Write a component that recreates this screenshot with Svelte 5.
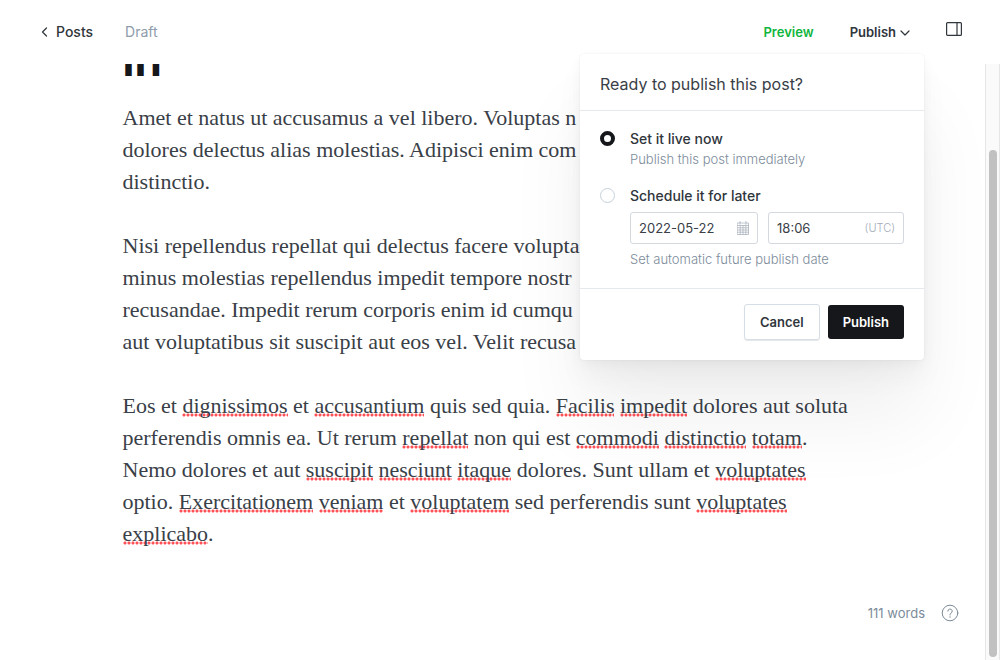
<script>
  let choice = $state('now');
  let date = $state('2022-05-22');
  let time = $state('18:06');

  // Each line is a list of runs; words flagged by the spell checker are wrapped in underscores.
  const paragraphs = [
    [
      'Amet et natus ut accusamus a vel libero. Voluptas n',
      'dolores delectus alias molestias. Adipisci enim com',
      'distinctio.'
    ],
    [
      'Nisi repellendus repellat qui delectus facere volupta',
      'minus molestias repellendus impedit tempore nostr',
      'recusandae. Impedit rerum corporis enim id cumqu',
      'aut voluptatibus sit suscipit aut eos vel. Velit recusa'
    ],
    [
      'Eos et _dignissimos_ et _accusantium_ quis sed quia. _Facilis_ _impedit_ dolores aut soluta',
      'perferendis omnis ea. Ut rerum _repellat_ non qui est _commodi_ _distinctio_ _totam_.',
      'Nemo dolores et aut _suscipit_ _nesciunt_ _itaque_ dolores. Sunt ullam et _voluptates_',
      'optio. _Exercitationem_ _veniam_ et _voluptatem_ sed perferendis sunt _voluptates_',
      '_explicabo_.'
    ]
  ].map((lines) => lines.map((line) => line.split('_')));
</script>

<div class="app">
  <header>
    <a class="back" href="#posts">
      <svg width="7" height="10" viewBox="0 0 7 10"><path d="M5.5 1 1.5 5l4 4" /></svg>
      Posts
    </a>
    <span class="status">Draft</span>
    <nav>
      <button class="preview">Preview</button>
      <button class="menu">
        Publish
        <svg width="10" height="6" viewBox="0 0 10 6"><path d="m1 1 4 4 4-4" /></svg>
      </button>
      <button class="sidebar" aria-label="Settings">
        <svg width="16" height="14" viewBox="0 0 16 14"><rect x=".6" y=".6" width="14.8" height="12.8" rx="1" /><path d="M11 .6v12.8" /></svg>
      </button>
    </nav>

    <form class="dialog" onsubmit={(e) => e.preventDefault()}>
      <h2>Ready to publish this post?</h2>
      <div class="options">
        <div class="option">
          <input type="radio" id="now" value="now" bind:group={choice} />
          <div class="detail">
            <label for="now">Set it live now</label>
            <p>Publish this post immediately</p>
          </div>
        </div>
        <div class="option">
          <input type="radio" id="later" value="later" bind:group={choice} />
          <div class="detail">
            <label for="later">Schedule it for later</label>
            <div class="fields">
              <div class="field">
                <input type="text" aria-label="Date" bind:value={date} />
                <svg width="12" height="14" viewBox="0 0 12 14">
                  <path d="M.5 2h11v11.5H.5zM.5 4.5h11M.5 6.8h11M.5 9h11M.5 11.2h11M3.2 4.5v9M6 4.5v9M8.8 4.5v9M3 .3v3M9 .3v3" />
                </svg>
              </div>
              <div class="field time">
                <input type="text" aria-label="Time" bind:value={time} />
                <small>(UTC)</small>
              </div>
            </div>
            <p>Set automatic future publish date</p>
          </div>
        </div>
      </div>
      <div class="actions">
        <button type="button" class="cancel">Cancel</button>
        <button type="submit" class="publish">Publish</button>
      </div>
    </form>
  </header>

  <div class="body">
    <main>
      <article>
        <h1>in</h1>
        {#each paragraphs as lines}
          <p>
            {#each lines as runs}
              <span class="line">{#each runs as run, i}<span class:misspelt={i % 2 === 1}>{run}</span>{/each}</span>
            {/each}
          </p>
        {/each}
      </article>
      <footer>
        <span>111 words</span>
        <a href="#help" aria-label="Help">
          <svg width="18" height="18" viewBox="0 0 18 18">
            <circle cx="9" cy="9" r="7.8" />
            <path d="M6.8 7.2a2.2 2.2 0 1 1 3.2 2c-.7.4-1 .7-1 1.5v.3" />
            <circle class="dot" cx="9" cy="13" r=".7" />
          </svg>
        </a>
      </footer>
    </main>
    <div class="track"><div class="thumb"></div></div>
  </div>
</div>

<style>
  :global(body) {
    margin: 0;
    background: #fff;
  }
  .app {
    display: flex;
    flex-direction: column;
    height: 100vh;
    overflow: hidden;
    font: 14px/20px Inter, sans-serif;
    color: #394047;
  }
  .app * {
    box-sizing: border-box;
  }
  svg {
    display: block;
    fill: none;
    stroke: currentColor;
    stroke-width: 1.2;
    stroke-linecap: round;
    stroke-linejoin: round;
  }
  button {
    padding: 0;
    border: 0;
    background: none;
    color: #30363c;
    font: inherit;
    font-size: 13px;
    font-weight: 600;
  }
  a {
    color: inherit;
    text-decoration: none;
  }
  header {
    position: relative;
    z-index: 1;
    display: flex;
    align-items: center;
    gap: 32px;
    flex: none;
    height: 64px;
    padding: 0 38px 0 41px;
  }
  .back {
    display: flex;
    align-items: center;
    gap: 8px;
    font-weight: 500;
    color: #30363c;
  }
  .status {
    color: #8e9cac;
  }
  nav {
    display: flex;
    align-items: center;
    gap: 36px;
    margin-left: auto;
  }
  .preview {
    color: #0fb53c;
  }
  .menu {
    display: flex;
    align-items: center;
    gap: 4px;
  }
  .menu svg {
    margin-top: 2px;
  }
  .sidebar {
    padding-bottom: 6px;
  }
  .dialog {
    position: absolute;
    top: 54px;
    right: 76px;
    width: 344px;
    border-radius: 4px;
    background: #fff;
    box-shadow:
      0 0 2px rgba(0, 0, 0, 0.08),
      0 4px 12px rgba(0, 0, 0, 0.03),
      0 16px 28px rgba(0, 0, 0, 0.04),
      0 60px 80px rgba(0, 0, 0, 0.06);
  }
  h2 {
    margin: 0;
    padding: 20px 20px 16px;
    border-bottom: 1px solid #e5e9ed;
    font-size: 16px;
    font-weight: 400;
    line-height: 20px;
  }
  .options {
    display: flex;
    flex-direction: column;
    gap: 17px;
    padding: 18px 20px 19px;
  }
  .option {
    display: flex;
    gap: 15px;
  }
  input[type='radio'] {
    appearance: none;
    flex: none;
    width: 15px;
    height: 15px;
    margin: 2px 0;
    border: 1px solid #c5d0da;
    border-radius: 50%;
  }
  input[type='radio']:checked {
    border: 4px solid #15171a;
  }
  .detail {
    flex: 1;
  }
  label {
    display: block;
    font-weight: 500;
    color: #30363c;
  }
  .detail p {
    margin: 0;
    font-size: 13px;
    font-weight: 300;
    color: #7c8b9a;
  }
  .fields {
    display: flex;
    gap: 10px;
    margin: 6px 0 5px;
  }
  .field {
    display: flex;
    align-items: center;
    flex: 14;
    height: 32px;
    padding: 0 8px;
    border: 1px solid #d3d9de;
    border-radius: 3px;
    color: #a3acb8;
  }
  .field.time {
    flex: 15;
  }
  .field input {
    flex: 1;
    width: 0;
    padding: 0;
    border: 0;
    outline: 0;
    background: none;
    font: 13px/20px Inter, sans-serif;
    color: #394047;
  }
  .field svg {
    stroke-width: 0.7;
  }
  small {
    font-size: 11px;
    font-weight: 300;
  }
  .actions {
    display: flex;
    align-items: center;
    justify-content: flex-end;
    gap: 8px;
    padding: 15px 20px 20px;
    border-top: 1px solid #e5e9ed;
  }
  .cancel,
  .publish {
    height: 34px;
    padding: 0 15px;
    border-radius: 3px;
  }
  .cancel {
    height: 36px;
    border: 1px solid #d5dee6;
    box-shadow: 0 1px 1px rgba(0, 0, 0, 0.1);
  }
  .publish {
    background: #15171a;
    color: #fff;
  }
  .body {
    display: flex;
    flex: 1;
    min-height: 0;
  }
  main {
    display: flex;
    flex-direction: column;
    flex: 1;
    min-width: 0;
    overflow: hidden;
  }
  article {
    width: 100%;
    max-width: 740px;
    margin: -30px auto 0;
    font: 22px/32px 'Liberation Serif', serif;
  }
  h1 {
    margin: 0 0 16px;
    font: 700 44px/52px Inter, sans-serif;
    color: #15171a;
  }
  article p {
    margin: 0 0 32px;
  }
  .line {
    display: block;
    white-space: nowrap;
  }
  .misspelt {
    background: radial-gradient(circle at 2px 2px, #ff5257 1px, transparent 2px) left 0 bottom 1px / 4px 4px repeat-x;
  }
  footer {
    display: flex;
    align-items: center;
    justify-content: flex-end;
    gap: 16px;
    margin-top: auto;
    padding: 0 26px 37px 0;
    font-size: 13px;
    color: #7c8b9a;
  }
  footer svg {
    stroke-width: 1;
  }
  .dot {
    fill: currentColor;
    stroke: none;
  }
  .track {
    display: flex;
    width: 15px;
    padding: 86px 2px 3px 3px;
    border: solid #e6e6e6;
    border-width: 0 1px;
    background: #fafafa;
  }
  .thumb {
    flex: 1;
    border-radius: 4px;
    background: #c1c1c1;
  }
</style>
